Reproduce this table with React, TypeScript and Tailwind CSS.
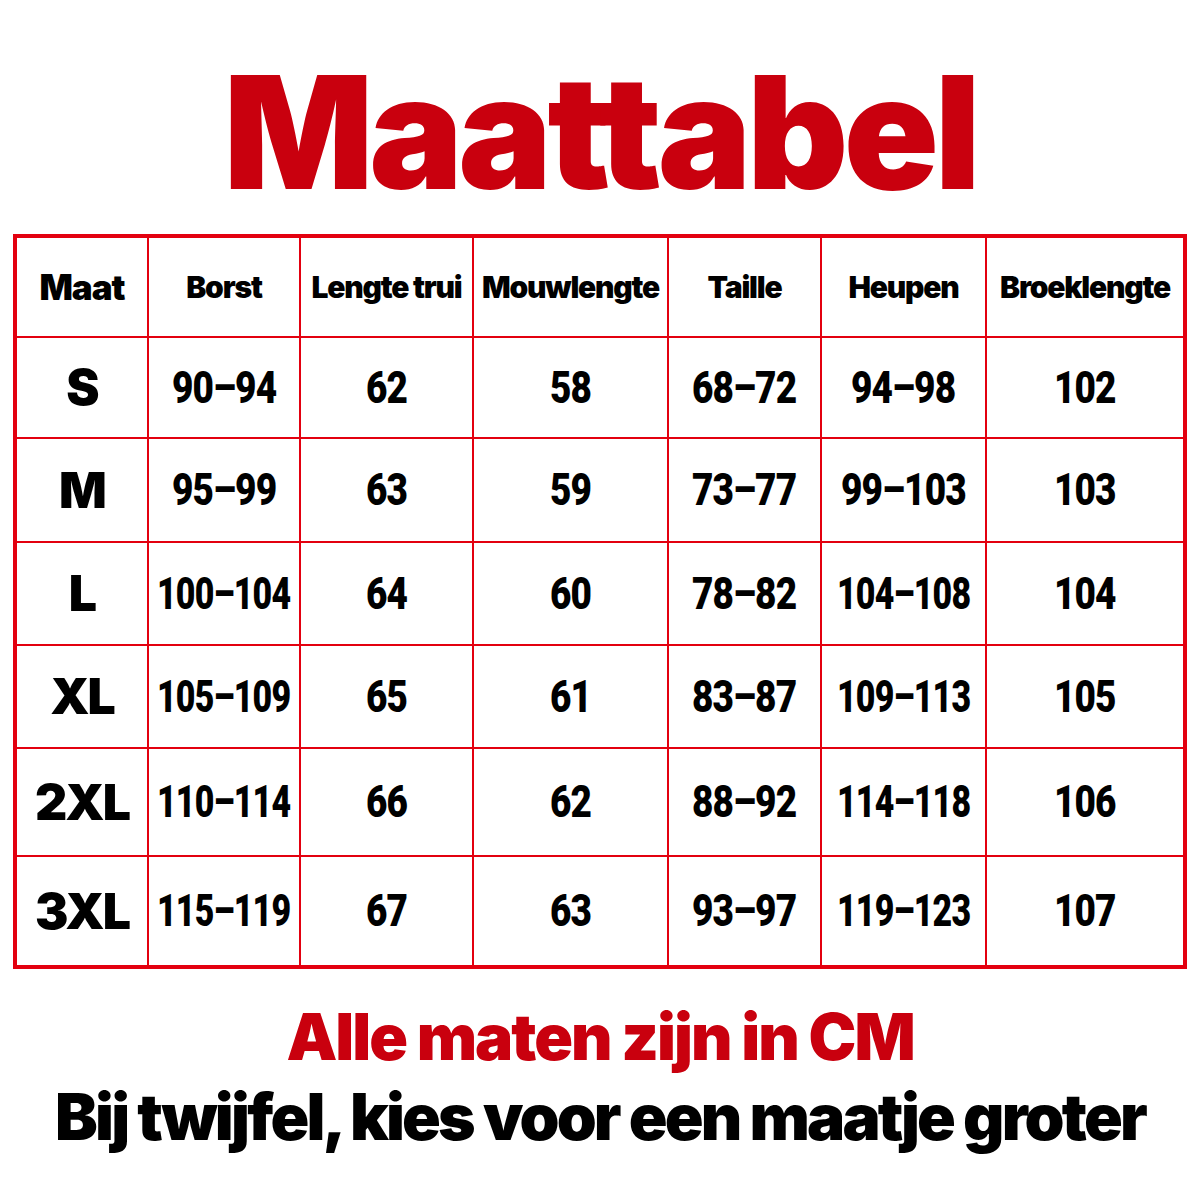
import React from "react";

const headers = ["Maat", "Borst", "Lengte trui", "Mouwlengte", "Taille", "Heupen", "Broeklengte"];

const rows = [
  ["S", "90–94", "62", "58", "68–72", "94–98", "102"],
  ["M", "95–99", "63", "59", "73–77", "99–103", "103"],
  ["L", "100–104", "64", "60", "78–82", "104–108", "104"],
  ["XL", "105–109", "65", "61", "83–87", "109–113", "105"],
  ["2XL", "110–114", "66", "62", "88–92", "114–118", "106"],
  ["3XL", "115–119", "67", "63", "93–97", "119–123", "107"],
];

const colWidths = ["w-[133px]", "w-[152px]", "w-[173px]", "w-[195px]", "w-[153px]", "w-[165px]", "w-[199px]"];
const rowHeights = ["h-[101px]", "h-[104px]", "h-[103px]", "h-[103px]", "h-[108px]", "h-[111px]"];

export default function App() {
  return (
    <div className="w-[1200px] h-[1200px] bg-white flex flex-col items-center font-['Inter',sans-serif]">
      {/* Title */}
      <h1 className="mt-[54px] text-[157px] leading-[156px] font-black text-[#c9000e] tracking-[-4.5px]">
        Maattabel
      </h1>

      {/* Table */}
      <table className="mt-[24px] w-[1170px] table-fixed border-collapse border-4 border-[#e3000f] text-black">
        <thead>
          <tr className="h-[101px]">
            {headers.map((h, i) => (
              <th
                key={h}
                className={`${colWidths[i]} border-2 border-[#e3000f] p-0 text-center font-black whitespace-nowrap ${
                  i === 0 ? "text-[35px] tracking-[-1px]" : "text-[30px] tracking-[-1.2px]"
                }`}
              >
                {h}
              </th>
            ))}
          </tr>
        </thead>
        <tbody>
          {rows.map((r, ri) => (
            <tr key={r[0]} className={rowHeights[ri]}>
              {r.map((c, ci) => (
                <td key={ci} className="border-2 border-[#e3000f] p-0 whitespace-nowrap">
                  <div className="flex justify-center">
                    {ci === 0 ? (
                      <span className="font-black text-[50px] tracking-[-2px]">{c}</span>
                    ) : (
                      <span
                        className={`inline-block font-['Roboto',sans-serif] font-black text-[44px] tracking-[-1px] ${
                          c.length > 6 ? "scale-x-[0.77]" : "scale-x-[0.84]"
                        }`}
                      >
                        {c}
                      </span>
                    )}
                  </div>
                </td>
              ))}
            </tr>
          ))}
        </tbody>
      </table>

      {/* Footer */}
      <div className="mt-[30px] flex flex-col items-center font-black">
        <p className="text-[64px] leading-[76px] text-[#c9000e] tracking-[-2px]">Alle maten zijn in CM</p>
        <p className="mt-[4px] text-[64px] leading-[76px] text-black tracking-[-2.8px]">
          Bij twijfel, kies voor een maatje groter
        </p>
      </div>
    </div>
  );
}
